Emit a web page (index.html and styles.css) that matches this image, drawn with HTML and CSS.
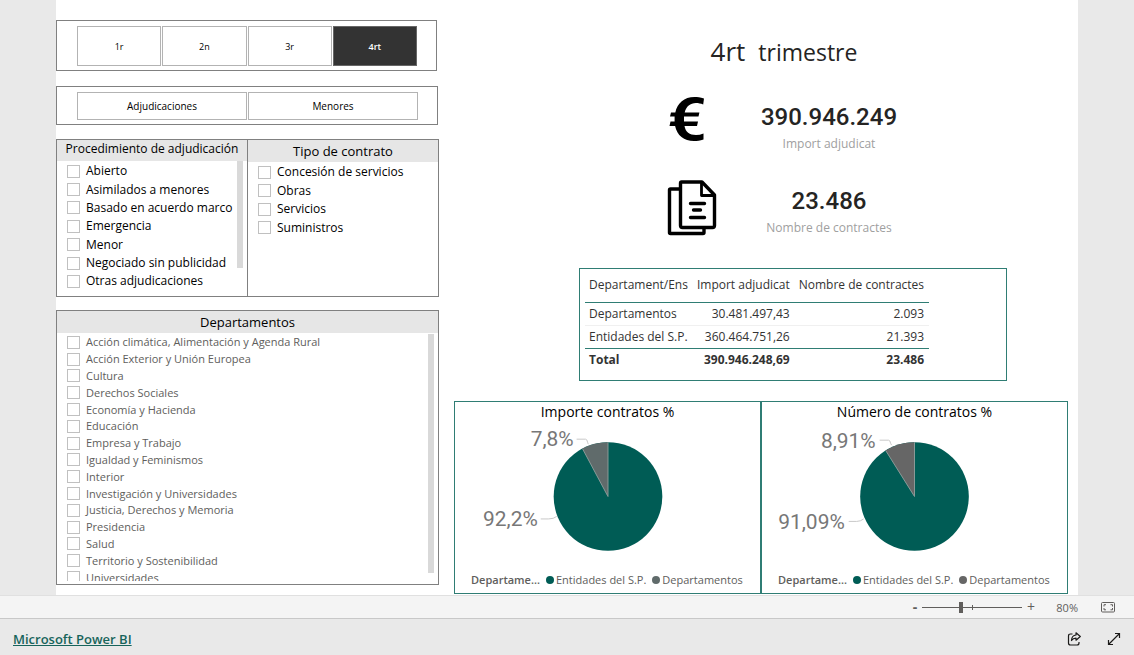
FILE: index.html
```html
<!DOCTYPE html>
<html lang="es">
<head>
<meta charset="utf-8">
<title>Contratación pública - Microsoft Power BI</title>
<link rel="stylesheet" href="styles.css">
</head>
<body>
<main class="canvas">
  <div class="page">
    <section class="filters">
      <div class="panel tiles tiles-quarter">
        <button type="button" class="tile">1r</button>
        <button type="button" class="tile">2n</button>
        <button type="button" class="tile">3r</button>
        <button type="button" class="tile selected">4rt</button>
      </div>
      <div class="panel tiles tiles-kind">
        <button type="button" class="tile">Adjudicaciones</button>
        <button type="button" class="tile">Menores</button>
      </div>
      <div class="panel pair">
        <div class="slicer">
          <h2 class="slicer-title narrow">Procedimiento de adjudicación</h2>
          <div class="viewport">
            <ul class="options eight">
              <li><label><input type="checkbox">Abierto</label></li>
              <li><label><input type="checkbox">Asimilados a menores</label></li>
              <li><label><input type="checkbox">Basado en acuerdo marco</label></li>
              <li><label><input type="checkbox">Emergencia</label></li>
              <li><label><input type="checkbox">Menor</label></li>
              <li><label><input type="checkbox">Negociado sin publicidad</label></li>
              <li><label><input type="checkbox">Otras adjudicaciones</label></li>
              <li><label><input type="checkbox" aria-label="Otros"></label></li>
            </ul>
            <div class="scrollbar short"></div>
          </div>
        </div>
        <div class="slicer">
          <h2 class="slicer-title">Tipo de contrato</h2>
          <div class="viewport">
            <ul class="options four">
              <li><label><input type="checkbox">Concesión de servicios</label></li>
              <li><label><input type="checkbox">Obras</label></li>
              <li><label><input type="checkbox">Servicios</label></li>
              <li><label><input type="checkbox">Suministros</label></li>
            </ul>
          </div>
        </div>
      </div>
      <div class="panel slicer departments">
        <h2 class="slicer-title">Departamentos</h2>
        <div class="viewport">
          <ul class="options fifteen">
            <li><label><input type="checkbox">Acción climática, Alimentación y Agenda Rural</label></li>
            <li><label><input type="checkbox">Acción Exterior y Unión Europea</label></li>
            <li><label><input type="checkbox">Cultura</label></li>
            <li><label><input type="checkbox">Derechos Sociales</label></li>
            <li><label><input type="checkbox">Economía y Hacienda</label></li>
            <li><label><input type="checkbox">Educación</label></li>
            <li><label><input type="checkbox">Empresa y Trabajo</label></li>
            <li><label><input type="checkbox">Igualdad y Feminismos</label></li>
            <li><label><input type="checkbox">Interior</label></li>
            <li><label><input type="checkbox">Investigación y Universidades</label></li>
            <li><label><input type="checkbox">Justicia, Derechos y Memoria</label></li>
            <li><label><input type="checkbox">Presidencia</label></li>
            <li><label><input type="checkbox">Salud</label></li>
            <li><label><input type="checkbox">Territorio y Sostenibilidad</label></li>
            <li><label><input type="checkbox">Universidades</label></li>
          </ul>
          <div class="scrollbar"></div>
        </div>
      </div>
    </section>

    <section class="results">
      <h1 class="quarter"><span class="quarter-value">4rt</span><span>trimestre</span></h1>
      <div class="kpi">
        <svg class="kpi-icon" width="50" height="56" viewBox="0 5 50 56" aria-hidden="true">
          <path d="M37 7.500C33 6.200 30.500 6 27.500 6C17 6 10.500 12 8.300 21.500H4l-1 4h4.600v5H3.500l-1 4.500h5.600C10 44.500 17 50 27 50c3 0 6-.4 9.500-1.500V42.500c-2.500 1-5 1.500-7.500 1.500-6.500 0-10.500-3-11.500-9H30l1-4.500H17v-5h14.500l.9-4H17.700c1.500-6 5.500-9.500 11.300-9.500 2.500 0 4.800.5 7.200 1.500z"/>
        </svg>
        <div class="kpi-text"><strong>390.946.249</strong><span>Import adjudicat</span></div>
      </div>
      <div class="kpi">
        <svg class="kpi-icon" width="50" height="56" viewBox="0 0 50 56" fill="none" stroke="#000" stroke-width="3.400" stroke-linecap="round" stroke-linejoin="round" aria-hidden="true">
          <path d="M12.500 9H3.500q-1 0-1 1v42.500q0 1 1 1H36q1 0 1-1V48"/>
          <path d="M14.500 2H35l12.500 13v30.500q0 2-2 2h-30q-2 0-2-2V3.500q0-1.500 1-1.500z"/>
          <path d="M34.500 3v12.500H47" stroke-width="2.800"/>
          <path d="M23.500 23.500h14M26.500 30h7M23.500 37.500h14"/>
        </svg>
        <div class="kpi-text"><strong>23.486</strong><span>Nombre de contractes</span></div>
      </div>

      <div class="table-card">
        <table class="summary">
          <thead>
            <tr><th scope="col">Departament/Ens</th><th scope="col">Import adjudicat</th><th scope="col">Nombre de contractes</th></tr>
          </thead>
          <tbody>
            <tr><td>Departamentos</td><td>30.481.497,43</td><td>2.093</td></tr>
            <tr><td>Entidades del S.P.</td><td>360.464.751,26</td><td>21.393</td></tr>
          </tbody>
          <tfoot>
            <tr><td>Total</td><td>390.946.248,69</td><td>23.486</td></tr>
          </tfoot>
        </table>
      </div>

      <div class="charts">
        <figure class="chart">
          <figcaption>Importe contratos %</figcaption>
          <svg class="pie" viewBox="0 0 306 148" role="img" aria-label="Importe contratos por departamento">
            <circle cx="153.500" cy="74.500" r="54.500" fill="#005c55"/>
            <path d="M153.500 74.500V20A54.500 54.500 0 0 0 127.850 26.400z" fill="#606b6b"/>
            <path class="edge" d="M153.500 20v54.500L127.850 26.400"/>
            <path class="leader" d="M122 17h9q1.500 0 2 3l.7 2M86 97h8q5 0 8-2.500"/>
            <text x="119" y="24">7,8%</text>
            <text x="83" y="104">92,2%</text>
          </svg>
          <div class="legend">
            <b>Departame...</b><span class="key"><i class="dot green"></i>Entidades del S.P.</span><span class="key"><i class="dot slate"></i>Departamentos</span>
          </div>
        </figure>
        <figure class="chart">
          <figcaption>Número de contratos %</figcaption>
          <svg class="pie" viewBox="0 0 306 148" role="img" aria-label="Número de contratos por departamento">
            <circle cx="153" cy="74.500" r="54.500" fill="#005c55"/>
            <path d="M153 74.500V20A54.500 54.500 0 0 0 124.050 28.300z" fill="#666"/>
            <path class="edge" d="M153 20v54.500L124.050 28.300"/>
            <path class="leader" d="M118 18h9q1.500 0 2 3l1 2M87 99.500h8q4 0 7-2.500"/>
            <text x="114" y="26">8,91%</text>
            <text x="83" y="107">91,09%</text>
          </svg>
          <div class="legend">
            <b>Departame...</b><span class="key"><i class="dot green"></i>Entidades del S.P.</span><span class="key"><i class="dot gray"></i>Departamentos</span>
          </div>
        </figure>
      </div>
    </section>
  </div>
</main>

<div class="statusbar">
  <button type="button" class="zoom-step minus" aria-label="Reducir">-</button>
  <input class="zoom-range" type="range" min="0" max="208" value="80" aria-label="Zoom">
  <button type="button" class="zoom-step" aria-label="Ampliar">+</button>
  <span class="zoom-value">80%</span>
  <button type="button" class="icon-button" aria-label="Ajustar a la página">
    <svg width="15" height="11" viewBox="0 0 15 11" fill="none" stroke="#605e5c"><rect x=".5" y=".5" width="13" height="9.500" rx="1"/><path d="M5 2.700H3v1.800M3 6v1.800h2M9.500 2.700h2v1.800M11.500 6v1.800h-2"/></svg>
  </button>
</div>

<footer class="footer">
  <a class="brand" href="#">Microsoft Power BI</a>
  <div class="footer-actions">
    <button type="button" class="icon-button" aria-label="Compartir">
      <svg width="14" height="14" viewBox="0 0 14 14" fill="none" stroke="#1b1a19" stroke-width="1.200" stroke-linejoin="round"><path d="M5.500 2H3.500Q1.500 2 1.500 4v7q0 2 2 2h6.500q2 0 2-2v-1"/><path d="M9 .8L13.300 4.500 9 8.200V6.100Q6 6.100 4.500 8.500 4.800 3.300 9 3z"/></svg>
    </button>
    <button type="button" class="icon-button" aria-label="Pantalla completa">
      <svg width="14" height="14" viewBox="0 0 14 14" fill="none" stroke="#1b1a19" stroke-width="1.200"><path d="M1.500 12.500l11-11M8 1.500h4.500V6M1.500 8v4.500H6"/></svg>
    </button>
  </div>
</footer>
</body>
</html>
```
FILE: styles.css
```css
* { box-sizing: border-box; }

body {
  margin: 0;
  min-height: 100vh;
  display: flex;
  flex-direction: column;
  background: #e9e9e9;
  color: #252423;
  font-family: "Open Sans", "Noto Sans", sans-serif;
  font-size: 12px;
}

h1, h2, ul, figure { margin: 0; padding: 0; font-weight: 400; }
ul { list-style: none; }
button { font: inherit; color: inherit; cursor: pointer; }

.canvas { flex: 1; display: grid; padding: 0 56px; }

.page {
  display: grid;
  grid-template-columns: 383fr 614fr;
  column-gap: 15px;
  padding: 20px 10px 1px 0;
  background: #fff;
}

/* Filters */
.filters { display: flex; flex-direction: column; }
.panel { border: 1px solid #808080; background: #fff; }

.tiles { display: grid; gap: 1px; padding: 5px 19px 4px 20px; }
.tiles-quarter { grid-template-columns: repeat(4, 1fr); grid-auto-rows: 40px; margin-bottom: 15px; margin-right: 2px; font-size: 9px; }
.tiles-kind { grid-template-columns: repeat(2, 1fr); grid-auto-rows: 28px; margin-bottom: 14px; margin-right: 1px; font-size: 10px; }
.tile { border: 1px solid #b3b3b3; background: #fff; color: #000; padding: 0; }
.tile.selected { background: #333; border-color: #666; color: #fff; font-weight: 600; }

.pair { display: grid; grid-template-columns: 190fr 191fr; margin-bottom: 13px; }
.pair .slicer + .slicer { border-left: 1px solid #808080; }
.pair .viewport { height: 132px; margin-bottom: 2px; }
.slicer-title {
  background: #e6e6e6;
  color: #000;
  font-size: 13px;
  line-height: 22px;
  text-align: center;
}
.slicer-title.narrow { font-size: 12px; line-height: 18px; padding-bottom: 3px; white-space: nowrap; }

.viewport { display: flex; justify-content: space-between; overflow: hidden; }
.options { display: grid; grid-auto-rows: 1fr; padding-left: 10px; font-size: 12px; color: #000; white-space: nowrap; }
.options.eight { height: 147px; margin-top: 1px; }
.options.four { height: 74px; margin-top: 1px; }
.options.fifteen { height: 252px; color: #605e5c; font-size: 11px; }
.options li { display: flex; align-items: center; min-height: 0; }
.options label { display: flex; align-items: center; gap: 6px; line-height: 16px; }
.options input {
  appearance: none;
  width: 13px;
  height: 13px;
  margin: 0;
  border: 1px solid #c0c0c0;
  background: #fff;
}
.scrollbar { width: 6px; margin-right: 4px; background: #d9d9d9; }
.scrollbar.short { height: 107px; }

.departments .viewport { height: 247px; margin: 1px 0 3px; }
.departments .scrollbar { height: 239px; }

/* Results */
.results { display: flex; flex-direction: column; }
.quarter {
  display: flex;
  justify-content: center;
  align-items: baseline;
  gap: 13px;
  padding: 13px 0 12px 46px;
  font-size: 23px;
  line-height: 36px;
}
.quarter-value { font-size: 26px; }

.kpi {
  display: grid;
  grid-template-columns: 50px 150px;
  column-gap: 37px;
  align-items: center;
  padding-left: 213px;
  height: 84px;
}
.kpi-text { display: flex; flex-direction: column; align-items: center; padding-top: 9px; }
.kpi-text strong { font: 500 24px/30px Roboto, sans-serif; }
.kpi-text span { color: #a0a0a0; line-height: 24px; white-space: nowrap; }

.table-card { margin: 18px 61px 20px 125px; padding: 0 5px 9px; border: 1px solid #2f7d74; }
.summary { border-collapse: collapse; color: #333; line-height: 16px; white-space: nowrap; }
.summary th { font-weight: 400; height: 33px; }
.summary th, .summary td { padding: 0 5px 0 4px; text-align: right; }
.summary td { height: 23px; }
.summary th:first-child, .summary td:first-child { text-align: left; }
.summary thead tr { border-bottom: 1px solid #2f7d74; }
.summary tbody tr + tr { border-top: 1px solid #f0f0f0; }
.summary tfoot tr { border-top: 1px solid #2f7d74; font-weight: 700; }

.charts { flex: 1; display: grid; grid-template-columns: 1fr 1fr; }
.chart { border: 1px solid #2f7d74; display: flex; flex-direction: column; }
.chart figcaption { color: #000; font-size: 14px; line-height: 20px; text-align: center; }
.pie { display: block; width: 100%; height: 148px; }
.pie text { font: 21px Roboto, sans-serif; fill: #777; text-anchor: end; }
.edge { fill: none; stroke: #8a9a98; stroke-width: 1; }
.leader { fill: none; stroke: #c8c8c8; }
.legend { display: flex; align-items: center; gap: 6px; padding: 0 0 3px 16px; line-height: 20px; font-size: 11px; color: #605e5c; white-space: nowrap; }
.legend b { font-weight: 600; }
.key { display: flex; align-items: center; gap: 2px; }
.dot { width: 8px; height: 8px; border-radius: 50%; }
.dot.green { background: #005c55; }
.dot.slate { background: #606b6b; }
.dot.gray { background: #666; }

/* Bars */
.statusbar {
  display: flex;
  align-items: center;
  justify-content: flex-end;
  height: 24px;
  padding-right: 18px;
  background: #f4f4f4;
  border-top: 1px solid #e0e0e0;
  border-bottom: 1px solid #c8c8c8;
  color: #605e5c;
}
.zoom-step { width: 14px; padding: 0; border: 0; background: none; font-size: 14px; line-height: 20px; }
.zoom-step.minus { font-weight: 700; }
.zoom-range {
  appearance: none;
  width: 100px;
  height: 11px;
  margin: 0 2px 0 0;
  background:
    linear-gradient(#605e5c, #605e5c) center / 100% 1px no-repeat,
    linear-gradient(#605e5c, #605e5c) center / 1px 5px no-repeat;
}
.zoom-range::-webkit-slider-thumb { appearance: none; width: 4px; height: 11px; background: #605e5c; }
.zoom-value { width: 40px; text-align: right; font-size: 11px; }
.icon-button { display: flex; padding: 0; border: 0; background: none; }
.statusbar .icon-button { margin-left: 23px; }

.footer { display: flex; align-items: center; justify-content: space-between; height: 36px; padding: 4px 13px 0; }
.brand { color: #17645b; font-size: 13px; font-weight: 600; }
.footer-actions { display: flex; gap: 26px; }
```
